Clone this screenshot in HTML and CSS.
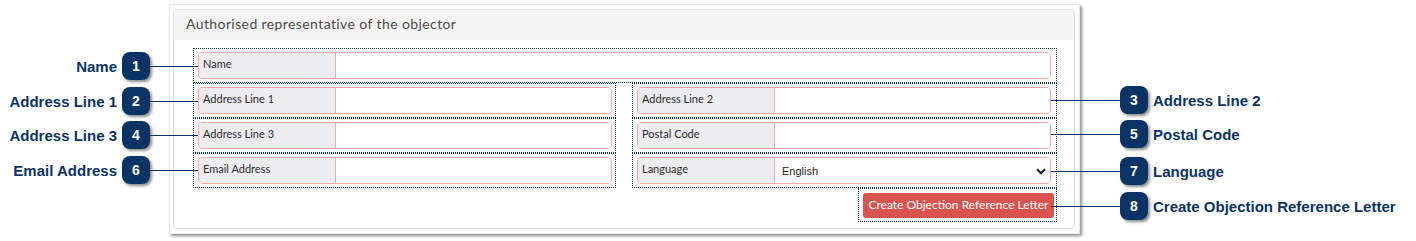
FILE: index.html
```html
<!DOCTYPE html>
<html lang="en">
<head>
    <meta charset="UTF-8">
    <title>Authorised representative of the objector</title>
    <link rel="stylesheet" href="styles.css">
</head>
<body>

    <div class="shot">
        <div class="panel">
            <div class="panel-heading">Authorised representative of the objector</div>
            <div class="panel-body">
                <div class="field wide">
                    <div class="input-group"><span class="addon">Name</span><span class="control"></span></div>
                </div>
                <div class="field col-left">
                    <div class="input-group"><span class="addon">Address Line 1</span><span class="control"></span></div>
                </div>
                <div class="field">
                    <div class="input-group"><span class="addon">Address Line 2</span><span class="control"></span></div>
                </div>
                <div class="field col-left">
                    <div class="input-group"><span class="addon">Address Line 3</span><span class="control"></span></div>
                </div>
                <div class="field">
                    <div class="input-group"><span class="addon">Postal Code</span><span class="control"></span></div>
                </div>
                <div class="field col-left">
                    <div class="input-group"><span class="addon">Email Address</span><span class="control"></span></div>
                </div>
                <div class="field">
                    <div class="input-group">
                        <span class="addon">Language</span>
                        <span class="control select">English
                            <svg class="chevron" width="10" height="7" viewBox="0 0 10 7"><path d="M1 1.2 L5 5.2 L9 1.2" fill="none" stroke="#222" stroke-width="2.2"/></svg>
                        </span>
                    </div>
                </div>
                <div class="field button-field">
                    <button class="btn-create">Create Objection Reference Letter</button>
                </div>
            </div>
        </div>
    </div>

    <!-- callouts -->
    <div class="callout left" style="top: 52px"><span class="text">Name</span><span class="badge">1</span><span class="line"></span></div>
    <div class="callout left" style="top: 87px"><span class="text">Address Line 1</span><span class="badge">2</span><span class="line"></span></div>
    <div class="callout left" style="top: 121px"><span class="text">Address Line 3</span><span class="badge">4</span><span class="line"></span></div>
    <div class="callout left" style="top: 156px"><span class="text">Email Address</span><span class="badge">6</span><span class="line"></span></div>

    <div class="callout right" style="top: 86px"><span class="line"></span><span class="badge">3</span><span class="text">Address Line 2</span></div>
    <div class="callout right" style="top: 120px"><span class="line"></span><span class="badge">5</span><span class="text">Postal Code</span></div>
    <div class="callout right" style="top: 157px"><span class="line"></span><span class="badge">7</span><span class="text">Language</span></div>
    <div class="callout right" style="top: 192px"><span class="line"></span><span class="badge">8</span><span class="text">Create Objection Reference Letter</span></div>

</body>
</html>
```

FILE: styles.css
```css
body {
    margin: 0;
    padding: 0;
    background-color: #ffffff;
    position: relative;
    width: 1416px;
    height: 241px;
    overflow: hidden;
    font-family: Lato, "Open Sans", sans-serif;
}
.shot {
    position: absolute;
    left: 169px;
    top: 4px;
    width: 911px;
    box-sizing: border-box;
    padding: 4px 4px 4px 3px;
    background-color: #fff;
    border: 1px solid #e8e8e8;
    box-shadow: 2px 2px 3px rgba(0, 0, 0, 0.45);
}
.panel {
    border: 1px solid #dcdcdc;
    border-radius: 4px;
    background-color: #fff;
    overflow: hidden;
}
.panel-heading {
    background-color: #f4f4f4;
    height: 30px;
    line-height: 28px;
    padding-left: 12px;
    font-size: 14px;
    color: #4a4a4a;
    letter-spacing: 0.4px;
}
.panel-body {
    display: grid;
    grid-template-columns: 423px 425px;
    column-gap: 16px;
    padding: 8px 16px 6px 19px;
}
.field {
    border: 1px dotted #0b2f5c;
    padding: 3px 5px 3px 4px;
}
.field.col-left {
    padding-right: 3px;
}
.field.wide {
    grid-column: 1 / 3;
}
.input-group {
    display: flex;
    height: 27px;
    box-sizing: border-box;
    border: 1px solid #f6a9a9;
    border-radius: 4px;
    overflow: hidden;
}
.addon {
    width: 137px;
    box-sizing: border-box;
    flex-shrink: 0;
    background-color: #ededf0;
    border-right: 1px solid #f6a9a9;
    font-size: 11px;
    color: #2b2b2b;
    padding-left: 4px;
    line-height: 22px;
}
.control {
    flex: 1;
    background-color: #fff;
}
.select {
    display: flex;
    align-items: center;
    justify-content: space-between;
    padding: 0 4px 0 7px;
    font-family: "Liberation Sans", Arial, sans-serif;
    font-size: 11px;
    color: #222;
}
.chevron {
    margin-top: 1px;
}
.button-field {
    grid-column: 2;
    justify-self: end;
    padding: 4px 2px 3px 4px;
}
.btn-create {
    display: block;
    width: 191px;
    height: 25px;
    border: none;
    border-radius: 3px;
    background-color: #d9534f;
    color: #fff;
    font-family: Lato, "Open Sans", sans-serif;
    font-size: 12px;
    padding: 0 0 2px;
}

/* callouts */
.callout {
    position: absolute;
    display: flex;
    align-items: center;
    height: 28px;
}
.callout.left {
    right: calc(100% - 198px);
}
.callout.right {
    left: 1051px;
}
.badge {
    width: 28px;
    height: 28px;
    border-radius: 8px;
    background-color: #0a3366;
    color: #fff;
    font-family: "Liberation Sans", Arial, sans-serif;
    font-weight: bold;
    font-size: 14px;
    line-height: 28px;
    text-align: center;
    box-shadow: 2px 2px 3px rgba(0, 0, 0, 0.45);
}
.line {
    height: 1px;
    background-color: #0a3366;
    width: 48px;
}
.callout.right .line {
    width: 69px;
}
.text {
    font-family: "Liberation Sans", Arial, sans-serif;
    font-weight: bold;
    font-size: 15px;
    color: #0a3366;
    white-space: nowrap;
}
.callout.left .text {
    margin-right: 5px;
}
.callout.right .text {
    margin-left: 5px;
}
```
